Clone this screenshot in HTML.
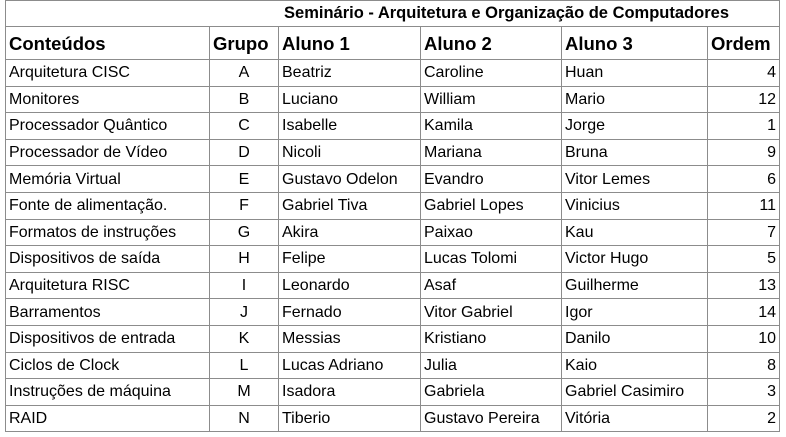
<!DOCTYPE html>
<html><head><meta charset="utf-8"><style>
html,body{margin:0;padding:0;background:#fff;width:786px;height:437px;overflow:hidden}
table{position:absolute;left:5px;top:0;border-collapse:collapse;table-layout:fixed;font-family:"Liberation Sans",sans-serif;font-size:16px;color:#000}
td{border:1px solid #8c8c8c;padding:0 3px;height:25.6px;white-space:nowrap;overflow:hidden;line-height:25px}
tr.t td{height:25px;font-weight:bold;font-size:16.5px;text-align:right;padding-right:50px}
tr.h td{font-weight:bold;font-size:18.5px;height:30px;line-height:30px;padding-top:2px}
.c{text-align:center}.r{text-align:right}
</style></head><body>
<table>
<colgroup><col style="width:204px"><col style="width:69px"><col style="width:142px"><col style="width:141px"><col style="width:146px"><col style="width:72px"></colgroup>
<tr class="t"><td colspan="6">Seminário - Arquitetura e Organização de Computadores</td></tr>
<tr class="h"><td>Conteúdos</td><td>Grupo</td><td>Aluno 1</td><td>Aluno 2</td><td>Aluno 3</td><td>Ordem</td></tr>
<tr><td>Arquitetura CISC</td><td class="c">A</td><td>Beatriz</td><td>Caroline</td><td>Huan</td><td class="r">4</td></tr>
<tr><td>Monitores</td><td class="c">B</td><td>Luciano</td><td>William</td><td>Mario</td><td class="r">12</td></tr>
<tr><td>Processador Quântico</td><td class="c">C</td><td>Isabelle</td><td>Kamila</td><td>Jorge</td><td class="r">1</td></tr>
<tr><td>Processador de Vídeo</td><td class="c">D</td><td>Nicoli</td><td>Mariana</td><td>Bruna</td><td class="r">9</td></tr>
<tr><td>Memória Virtual</td><td class="c">E</td><td>Gustavo Odelon</td><td>Evandro</td><td>Vitor Lemes</td><td class="r">6</td></tr>
<tr><td>Fonte de alimentação.</td><td class="c">F</td><td>Gabriel Tiva</td><td>Gabriel Lopes</td><td>Vinicius</td><td class="r">11</td></tr>
<tr><td>Formatos de instruções</td><td class="c">G</td><td>Akira</td><td>Paixao</td><td>Kau</td><td class="r">7</td></tr>
<tr><td>Dispositivos de saída</td><td class="c">H</td><td>Felipe</td><td>Lucas Tolomi</td><td>Victor Hugo</td><td class="r">5</td></tr>
<tr><td>Arquitetura RISC</td><td class="c">I</td><td>Leonardo</td><td>Asaf</td><td>Guilherme</td><td class="r">13</td></tr>
<tr><td>Barramentos</td><td class="c">J</td><td>Fernado</td><td>Vitor Gabriel</td><td>Igor</td><td class="r">14</td></tr>
<tr><td>Dispositivos de entrada</td><td class="c">K</td><td>Messias</td><td>Kristiano</td><td>Danilo</td><td class="r">10</td></tr>
<tr><td>Ciclos de Clock</td><td class="c">L</td><td>Lucas Adriano</td><td>Julia</td><td>Kaio</td><td class="r">8</td></tr>
<tr><td>Instruções de máquina</td><td class="c">M</td><td>Isadora</td><td>Gabriela</td><td>Gabriel Casimiro</td><td class="r">3</td></tr>
<tr><td>RAID</td><td class="c">N</td><td>Tiberio</td><td>Gustavo Pereira</td><td>Vitória</td><td class="r">2</td></tr>
</table>
</body></html>
